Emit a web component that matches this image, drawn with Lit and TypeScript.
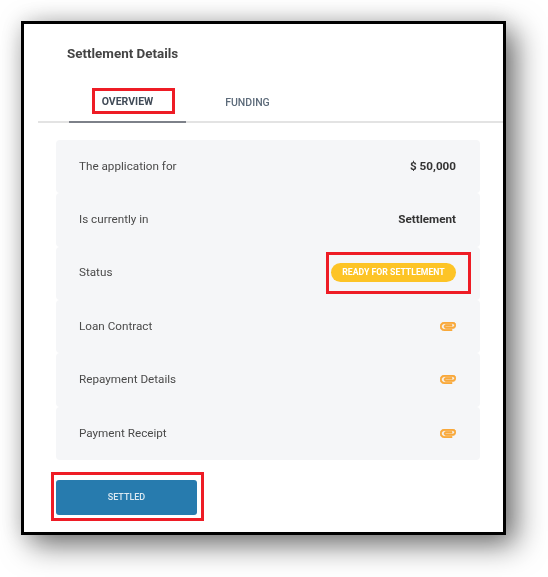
import { LitElement, html, css, svg } from "lit";
import { customElement } from "lit/decorators.js";

const clip = svg`<path d="M2 12.5C2 9.46 4.46 7 7.5 7H18c2.21 0 4 1.79 4 4s-1.79 4-4 4H9.5C8.12 15 7 13.88 7 12.5S8.12 10 9.5 10H17v2H9.41c-.55 0-.55 1 0 1H18c1.1 0 2-.9 2-2s-.9-2-2-2H7.5C5.57 9 4 10.57 4 12.5S5.57 16 7.5 16H17v2H7.5C4.46 18 2 15.54 2 12.5z"/>`;

@customElement("app-root")
export class AppRoot extends LitElement {
  static styles = css`
    :host {
      display: block;
      width: 548px;
      height: 577px;
      background: #fff;
      padding: 21px 0 0 21px;
      box-sizing: border-box;
      font-family: Roboto, "Liberation Sans", sans-serif;
      overflow: hidden;
    }
    .frame {
      position: relative;
      box-sizing: border-box;
      width: 485px;
      height: 514px;
      border: 3px solid #000;
      background: #fff;
      box-shadow: 10px 10px 28px rgba(0, 0, 0, 0.55), 0 0 20px rgba(0, 0, 0, 0.12);
    }
    .content {
      display: flex;
      flex-direction: column;
      height: 100%;
      filter: blur(0.4px);
    }
    .title {
      height: 58px;
      display: flex;
      align-items: center;
      padding-left: 43px;
      font-size: 13.4px;
      font-weight: 700;
      color: #444;
      box-sizing: border-box;
    }
    .tabs {
      display: flex;
      margin-left: 14px;
      height: 41px;
      box-sizing: border-box;
      border-bottom: 2px solid #e3e3e3;
      padding-left: 31px;
    }
    .tab {
      width: 117px;
      height: 41px;
      box-sizing: border-box;
      display: flex;
      align-items: center;
      justify-content: center;
      font-size: 10.5px;
      font-weight: 500;
      color: #5d6b7a;
    }
    .tab.active {
      color: #414b57;
      font-weight: 700;
      border-bottom: 2px solid #7d8189;
    }
    .tab.second {
      margin-left: 3px;
    }
    .panel {
      margin: 17px 23px 0 32px;
      display: flex;
      flex-direction: column;
    }
    .row {
      height: 53.34px;
      box-sizing: border-box;
      background: #f5f6f8;
      border-radius: 4px;
      padding: 0 24px 2px 23px;
      display: flex;
      align-items: center;
      justify-content: space-between;
      font-size: 11.7px;
      color: #4a4a4a;
    }
    .row:last-child {
      padding-bottom: 0;
    }
    .value {
      font-weight: 700;
      color: #333;
    }
    .badge {
      width: 125px;
      height: 19px;
      border-radius: 10px;
      background: #fdc426;
      color: #fff;
      font-size: 8.7px;
      font-weight: 700;
      display: flex;
      align-items: center;
      justify-content: center;
    }
    .clip {
      width: 16px;
      height: 9px;
      fill: #f9a93a;
      stroke: #f9a93a;
      stroke-width: 0.8;
      display: block;
      position: relative;
      top: 1px;
    }
    .row:last-child .clip {
      top: 0;
    }
    .action {
      margin: 20px 0 0 32px;
      width: 141px;
      height: 35px;
      border: 0;
      padding: 0;
      border-radius: 3px;
      background: #277bae;
      color: #dbe9f2;
      font: 500 9px Roboto, "Liberation Sans", sans-serif;
    }
    .mark {
      position: absolute;
      box-sizing: border-box;
      border: 3px solid #ee1c25;
    }
    .m1 { left: 68px; top: 64px; width: 83px; height: 26px; }
    .m2 { left: 302px; top: 228px; width: 145px; height: 42px; }
    .m3 { left: 27px; top: 448px; width: 153px; height: 49px; }
  `;

  private clipIcon() {
    return html`<svg class="clip" viewBox="2 7 20 11">${clip}</svg>`;
  }

  render() {
    return html`
      <div class="frame">
        <div class="content">
          <div class="title">Settlement Details</div>
          <div class="tabs">
            <div class="tab active">OVERVIEW</div>
            <div class="tab second">FUNDING</div>
          </div>
          <div class="panel">
            <div class="row"><span>The application for</span><span class="value">$ 50,000</span></div>
            <div class="row"><span>Is currently in</span><span class="value">Settlement</span></div>
            <div class="row"><span>Status</span><span class="badge">READY FOR SETTLEMENT</span></div>
            <div class="row"><span>Loan Contract</span>${this.clipIcon()}</div>
            <div class="row"><span>Repayment Details</span>${this.clipIcon()}</div>
            <div class="row"><span>Payment Receipt</span>${this.clipIcon()}</div>
          </div>
          <button class="action">SETTLED</button>
        </div>
        <div class="mark m1"></div>
        <div class="mark m2"></div>
        <div class="mark m3"></div>
      </div>
    `;
  }
}
